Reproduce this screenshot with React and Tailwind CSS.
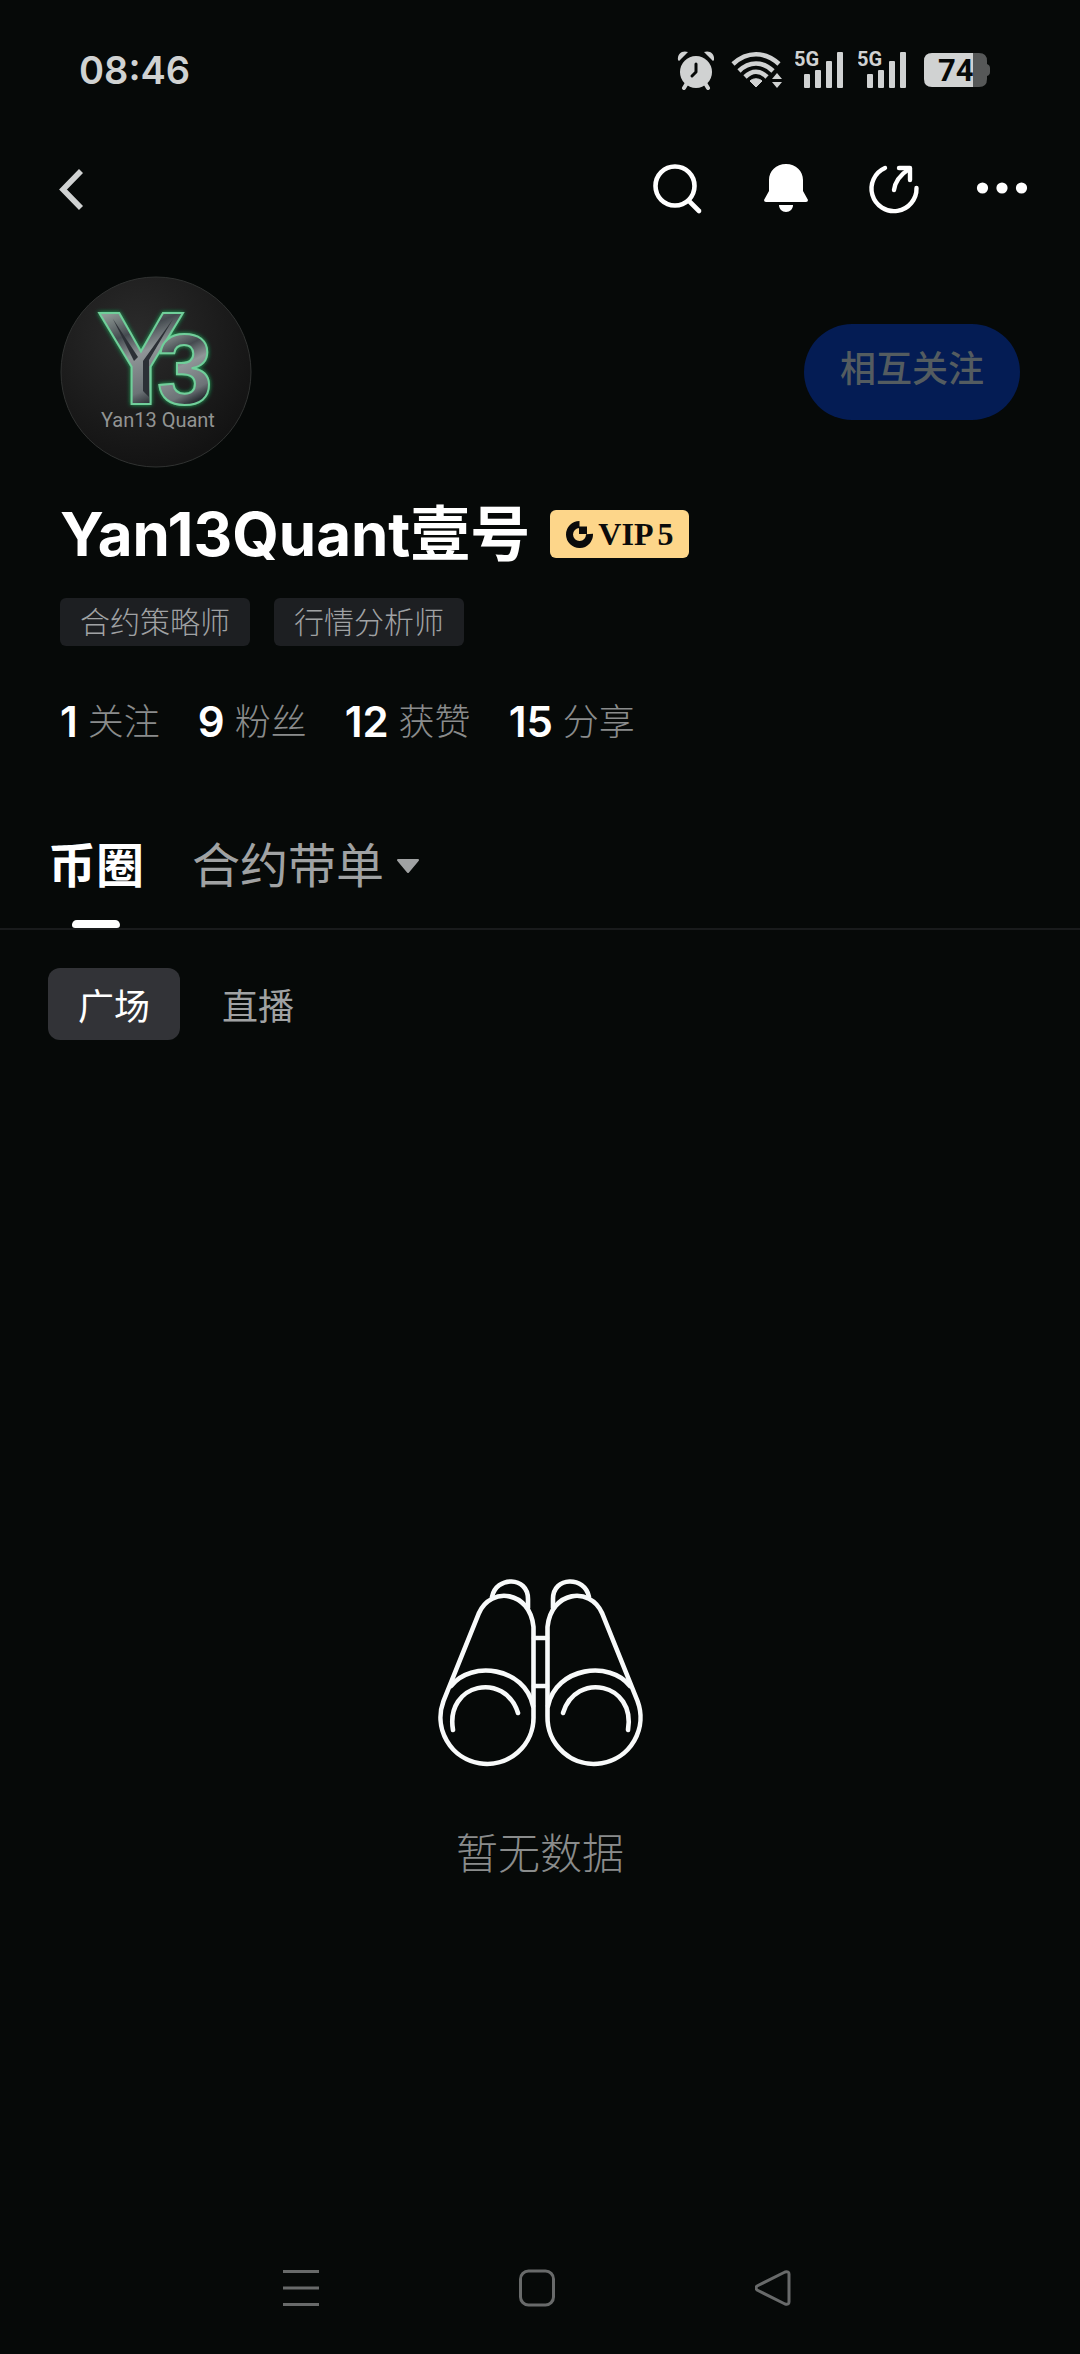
import React, { useState } from "react";

const stats = [
  { value: 1, label: "关注" },
  { value: 9, label: "粉丝" },
  { value: 12, label: "获赞" },
  { value: 15, label: "分享" },
];

const roles = ["合约策略师", "行情分析师"];

const SignalIcon = () => (
  <svg width="50" height="56" viewBox="0 -8 50 56" fill="#d0d2d2" aria-hidden="true">
    <text x="-1" y="16" fontSize="20" fontWeight="700" fontFamily="Roboto, sans-serif">5G</text>
    <rect x="9" y="24" width="6" height="14" rx="1" />
    <rect x="20" y="20" width="6" height="18" rx="1" />
    <rect x="31" y="11" width="6" height="27" rx="1" />
    <rect x="42" y="2" width="6" height="36" rx="1" />
  </svg>
);

const StatusBar = () => (
  <div className="flex h-[140px] items-center justify-between pr-[90px] pl-[79px] text-[#d0d2d2]">
    <span className="text-[38px] leading-none font-semibold">08:46</span>
    <div className="flex items-center">
      <svg className="mr-4" width="38" height="40" viewBox="0 0 38 40" aria-label="闹钟">
        <g stroke="#d0d2d2" strokeWidth="4" strokeLinecap="round">
          <path d="M10 33 L7 38 M28 33 L31 38" />
        </g>
        <circle cx="19" cy="22" r="16" fill="#d0d2d2" />
        <path d="M1 10 C0 3 6 0 11 2 L2 11 Z M37 10 C38 3 32 0 27 2 L36 11 Z" fill="#d0d2d2" />
        <path d="M19 14 V22 L15 26" fill="none" stroke="#060908" strokeWidth="3" strokeLinecap="round" strokeLinejoin="round" />
      </svg>
      <svg className="mr-3" width="52" height="40" viewBox="0 0 52 40" aria-label="Wi-Fi">
        <g fill="none" stroke="#d0d2d2" strokeWidth="4.6">
          <path d="M2 14 C16 1 34 1 48 14" />
          <path d="M8 21 C18 11 32 11 42 21" />
          <path d="M14 27 C21 20 29 20 36 27" />
        </g>
        <path d="M19 31 C22 28 28 28 31 31 L25 37 Z" fill="#d0d2d2" stroke="#d0d2d2" strokeLinejoin="round" />
        <path d="M46 23 L51 29 H41 Z M46 38 L51 32 H41 Z" fill="#d0d2d2" />
      </svg>
      <div className="flex gap-[13px]">
        <SignalIcon />
        <SignalIcon />
      </div>
      <svg className="ml-4" width="66" height="36" viewBox="0 0 66 36" aria-label="电量">
        <path d="M49 1 H55 Q63 1 63 9 V12 Q66 13 66 16 V20 Q66 23 63 24 V27 Q63 35 55 35 H49 Z" fill="#565858" />
        <path d="M49 1 H8 Q0 1 0 9 V27 Q0 35 8 35 H49 Z" fill="#d0d2d2" />
        <text x="14" y="29" fontSize="31" fontWeight="700" fill="#060908" fontFamily="Roboto, sans-serif">74</text>
      </svg>
    </div>
  </div>
);

const TopBar = () => (
  <header className="flex h-24 items-center justify-between pr-[50px] pl-12">
    <button type="button" aria-label="返回" className="flex size-12 items-center justify-center">
      <svg width="48" height="48" viewBox="0 0 48 48" fill="none" stroke="#d0d2d2" strokeWidth="5.6">
        <path d="M33 7 L15 25.500 L33 44" />
      </svg>
    </button>
    <div className="flex items-center gap-[52px]">
      <button type="button" aria-label="搜索">
        <svg width="56" height="56" viewBox="0 0 56 56" fill="none" stroke="#fff" strokeWidth="4.6" strokeLinecap="round">
          <circle cx="25" cy="26" r="19.5" />
          <path d="M40 42 L49 51" />
        </svg>
      </button>
      <button type="button" aria-label="通知">
        <svg width="56" height="56" viewBox="0 0 56 56" fill="#fff">
          <path d="M28 4 C18 4 11 11 11 20 V31 L6 40 Q6 42 8 42 H48 Q50 42 50 40 L45 31 V20 C45 11 38 4 28 4 Z" />
          <path d="M21 45 H35 C35 49 32 52 28 52 C24 52 21 49 21 45 Z" />
        </svg>
      </button>
      <button type="button" aria-label="分享">
        <svg width="56" height="56" viewBox="0 0 56 56" fill="none" stroke="#fff" strokeWidth="4.4" strokeLinecap="round" strokeLinejoin="round">
          <path d="M19 8 A22.5 22.5 0 1 0 50.500 28" />
          <path d="M33 8 H44 V20" />
          <path d="M28 30 C29 22 34 15 43 9" />
        </svg>
      </button>
      <button type="button" aria-label="更多">
        <svg width="56" height="56" viewBox="0 0 56 56" fill="#fff">
          <circle cx="8.500" cy="28" r="5.600" />
          <circle cx="28" cy="28" r="5.600" />
          <circle cx="47.500" cy="28" r="5.600" />
        </svg>
      </button>
    </div>
  </header>
);

const Avatar = () => (
  <svg width="192" height="192" viewBox="0 0 192 192" role="img" aria-label="Yan13 Quant">
    <defs>
      <radialGradient id="disc" cx="0.4" cy="0.3" r="0.7">
        <stop offset="0" stopColor="#2b2b2b" />
        <stop offset="1" stopColor="#131313" />
      </radialGradient>
      {/* alternating stops give the letters their bevelled steel look */}
      <linearGradient id="steel" x1="0" y1="0" x2="0.25" y2="1">
        <stop offset="0" stopColor="#b8c2be" />
        <stop offset="0.22" stopColor="#8d9794" />
        <stop offset="0.4" stopColor="#454b50" />
        <stop offset="0.55" stopColor="#8f9597" />
        <stop offset="0.8" stopColor="#6c7276" />
        <stop offset="0.9" stopColor="#2c3036" />
      </linearGradient>
      <filter id="glow" x="-20%" y="-20%" width="140%" height="140%">
        <feDropShadow dx="0" dy="0" stdDeviation="2" floodColor="#1fae5c" />
      </filter>
    </defs>
    <circle cx="96" cy="96" r="95" fill="url(#disc)" stroke="#303231" />
    <g fontWeight="700" fontFamily="'Liberation Sans', sans-serif" fill="url(#steel)" stroke="#6fcf9a" strokeWidth="2" filter="url(#glow)">
      <text x="37" y="128" fontSize="132">Y</text>
      <text x="97" y="128" fontSize="100">3</text>
    </g>
    <g fill="#2c3036">
      <path d="M53 43 L78 81 L74 85 Z" />
      <path d="M113 43 L89 84 V121 L83 115 V85 Z" />
    </g>
    <text x="41" y="151" fontSize="20" fill="#929493" fontFamily="Roboto, sans-serif">Yan13 Quant</text>
  </svg>
);

const VipBadge = () => (
  <span className="flex h-12 items-center rounded-md bg-[#fdd68a] px-4 text-[#0b0b0b]">
    <svg className="mr-1" width="28" height="28" viewBox="0 0 28 28" aria-hidden="true">
      <path d="M13.500 4.500 A10 10 0 1 0 23.500 14" fill="none" stroke="#0b0b0b" strokeWidth="7" />
      <path d="M13 6.500 H21 V14 H13 Z" fill="#0b0b0b" />
    </svg>
    <span className="font-['Liberation_Serif',serif] text-[32px] leading-none font-bold">
      VIP<span className="ml-1">5</span>
    </span>
  </span>
);

const Profile = () => (
  <section className="px-[60px] pt-10">
    <div className="flex items-center justify-between">
      <Avatar />
      <button type="button" className="h-24 w-[216px] rounded-full bg-[#041c54] pb-1.5 text-[36px] leading-none font-medium text-[#545c60]">
        相互关注
      </button>
    </div>
    <div className="mt-[30px] flex items-center gap-5">
      <h1 className="text-[60px] leading-[72px] font-bold text-white">Yan13Quant壹号</h1>
      <VipBadge />
    </div>
    <ul className="mt-7 flex gap-6">
      {roles.map((role) => (
        <li key={role} className="flex h-12 items-center rounded-md bg-[#1d1f22] px-5 text-[30px] leading-none font-light text-[#a0a2a4]">
          {role}
        </li>
      ))}
    </ul>
    <ul className="mt-12 flex gap-[38px]">
      {stats.map((item) => (
        <li key={item.label} className="flex items-center gap-2.5">
          <span className="text-[42px] leading-[56px] font-semibold text-white">{item.value}</span>
          <span className="text-[36px] leading-[56px] font-light text-[#8a8c8c]">{item.label}</span>
        </li>
      ))}
    </ul>
  </section>
);

const Binoculars = () => (
  <svg width="208" height="190" viewBox="-1 -1 208 190" fill="none" stroke="#f8fafa" strokeWidth="4.6" strokeLinecap="round" aria-hidden="true">
    {/* left barrel */}
    <g id="barrel">
      <path d="M96.500 48 V137 A46.500 46.500 0 1 1 6.500 122 L42 34 C54 7 93 12 96.500 48" />
      <path d="M14 107 C34 81 88 88 96 127" />
      <path d="M55 18 C59 -3 91 -3 91 20 V29" />
      <path d="M16 151 C8 104 68 92 81 134" />
    </g>
    {/* right barrel mirrors the left one */}
    <use href="#barrel" transform="translate(207 0) scale(-1 1)" />
    <path d="M97 59 H110 M97 107 H110" />
  </svg>
);

const NavBar = () => (
  <nav className="flex h-[132px] items-center justify-center gap-[200px] pr-1.5" aria-label="系统导航">
    <button type="button" aria-label="最近任务">
      <svg width="36" height="38" viewBox="0 0 36 38" stroke="#686a6a" strokeWidth="3">
        <path d="M0 2.500 H36 M0 19 H36 M0 35.500 H36" />
      </svg>
    </button>
    <button type="button" aria-label="主屏幕">
      <svg width="36" height="38" viewBox="0 0 36 38" fill="none" stroke="#686a6a" strokeWidth="3">
        <rect x="1.500" y="2" width="33" height="34" rx="8" />
      </svg>
    </button>
    <button type="button" aria-label="返回上一页">
      <svg width="36" height="38" viewBox="0 0 36 38" fill="none" stroke="#686a6a" strokeWidth="3" strokeLinejoin="round">
        <path d="M2 17 L30 3 Q34 2 34 5 V33 Q34 36 30 35 L2 21 Q0 19 2 17 Z" />
      </svg>
    </button>
  </nav>
);

const App = () => {
  const [feed, setFeed] = useState("广场");

  return (
    <div className="flex min-h-screen flex-col bg-[#060908] font-[Inter,'Noto_Sans_CJK_SC',sans-serif]">
      <StatusBar />
      <TopBar />
      <Profile />

      {/* Main tabs */}
      <div className="mt-20 flex items-start gap-12 border-b-2 border-[#191b1c] px-12 text-[48px] leading-[72px]">
        <button type="button" className="flex flex-col items-center gap-[18px] font-bold text-white">
          币圈
          <span className="h-2 w-12 rounded-t-md rounded-b-sm bg-white" />
        </button>
        <button type="button" className="flex items-center gap-3 text-[#a0a2a3]">
          合约带单
          <svg width="24" height="16" viewBox="0 0 24 16" fill="#a0a2a3" stroke="#a0a2a3" strokeWidth="2" strokeLinejoin="round">
            <path d="M2 2 H22 L12 14 Z" />
          </svg>
        </button>
      </div>

      {/* Feed switch */}
      <div className="flex gap-3 px-12 pt-[38px]">
        {["广场", "直播"].map((name) => (
          <button
            key={name}
            type="button"
            onClick={() => setFeed(name)}
            className={
              "h-[72px] w-[132px] rounded-xl pt-1.5 text-[36px] leading-none " +
              (feed === name ? "bg-[#323337] text-white" : "text-[#a0a2a3]")
            }
          >
            {name}
          </button>
        ))}
      </div>

      <main className="flex flex-1 flex-col items-center justify-center pt-[200px]">
        <Binoculars />
        <p className="mt-14 text-[42px] leading-[60px] font-light text-[#8a8c8c]">暂无数据</p>
      </main>

      <NavBar />
    </div>
  );
};

export default App;
